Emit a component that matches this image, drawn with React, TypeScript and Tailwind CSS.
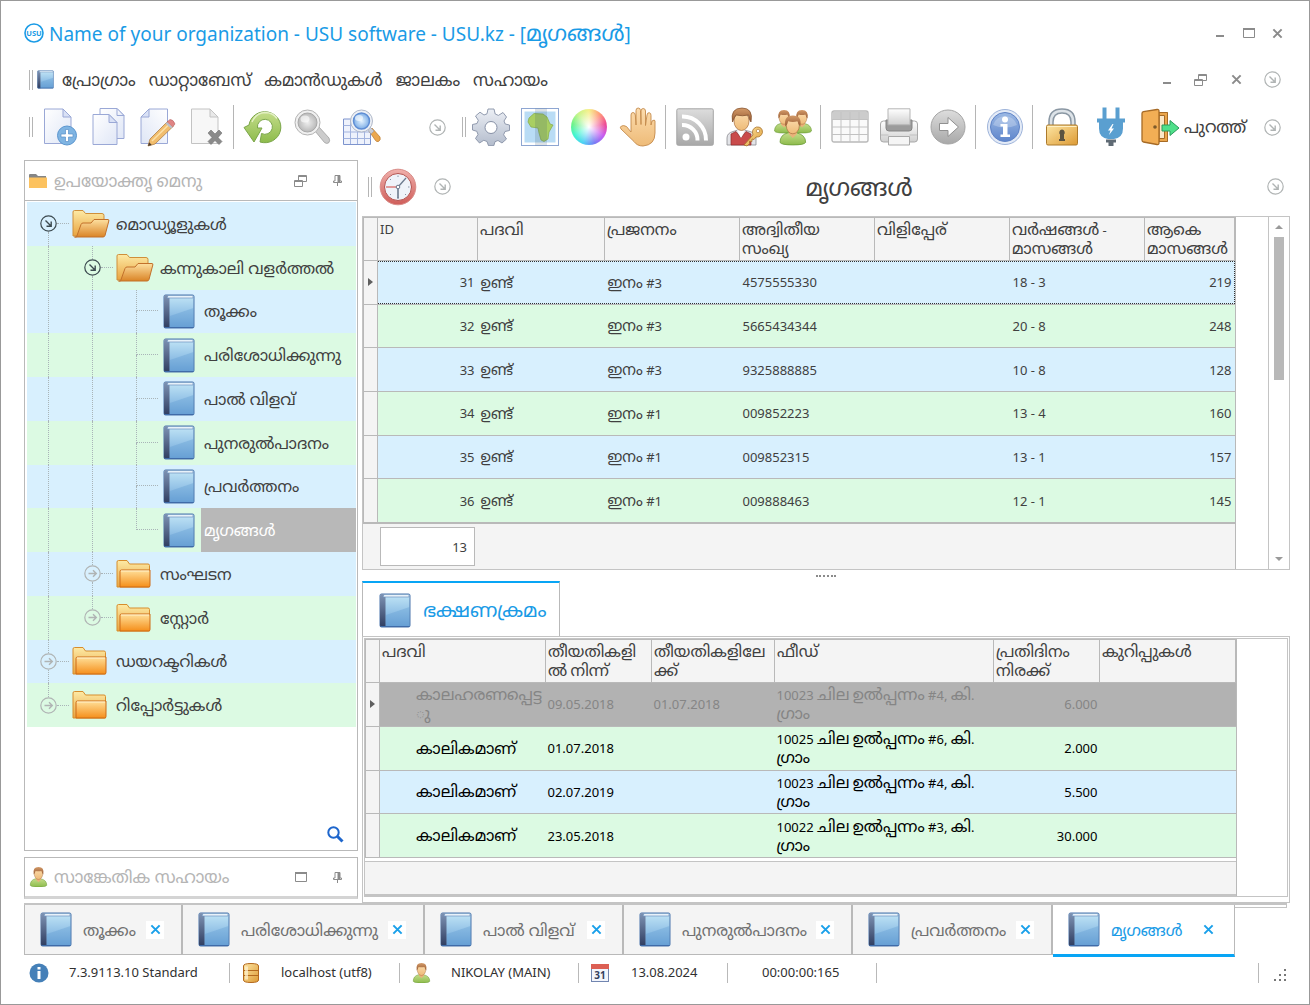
import React, { useState } from 'react';

type IconProps = { className?: string };

function Gradients() {
  return (
    <svg className="absolute h-0 w-0" aria-hidden="true">
      <defs>
        <linearGradient id="cover" x1="0" y1="0" x2="0" y2="1">
          <stop offset="0" stopColor="#c3e6f6" />
          <stop offset="0.5" stopColor="#97c5e8" />
          <stop offset="1" stopColor="#6aa1d6" />
        </linearGradient>
        <linearGradient id="spine" x1="0" y1="0" x2="0" y2="1">
          <stop offset="0" stopColor="#7e93b4" />
          <stop offset="1" stopColor="#2f3d60" />
        </linearGradient>
        <linearGradient id="paper" x1="0" y1="0" x2="1" y2="1">
          <stop offset="0" stopColor="#ffffff" />
          <stop offset="1" stopColor="#dfe6f6" />
        </linearGradient>
        <linearGradient id="grey" x1="0" y1="0" x2="0" y2="1">
          <stop offset="0" stopColor="#dddddd" />
          <stop offset="1" stopColor="#a8a8a8" />
        </linearGradient>
        <linearGradient id="light" x1="0" y1="0" x2="0" y2="1">
          <stop offset="0" stopColor="#ffffff" />
          <stop offset="1" stopColor="#cfcfcf" />
        </linearGradient>
        <linearGradient id="folderBack" x1="0" y1="0" x2="0" y2="1">
          <stop offset="0" stopColor="#fdeaa5" />
          <stop offset="1" stopColor="#e9a440" />
        </linearGradient>
        <linearGradient id="folderFront" x1="0" y1="0" x2="0" y2="1">
          <stop offset="0" stopColor="#ffe09a" />
          <stop offset="1" stopColor="#f58f1b" />
        </linearGradient>
        <linearGradient id="folderOpen" x1="0" y1="0" x2="0" y2="1">
          <stop offset="0" stopColor="#fde0a0" />
          <stop offset="1" stopColor="#da8426" />
        </linearGradient>
        <linearGradient id="green" x1="0" y1="0" x2="0" y2="1">
          <stop offset="0" stopColor="#c4dd8a" />
          <stop offset="1" stopColor="#8dbb4c" />
        </linearGradient>
        <linearGradient id="gear" x1="0" y1="0" x2="0" y2="1">
          <stop offset="0" stopColor="#eceff5" />
          <stop offset="1" stopColor="#b3bccc" />
        </linearGradient>
        <linearGradient id="skin" x1="0" y1="0" x2="0" y2="1">
          <stop offset="0" stopColor="#fcdcae" />
          <stop offset="1" stopColor="#eebb78" />
        </linearGradient>
        <linearGradient id="gold" x1="0" y1="0" x2="1" y2="1">
          <stop offset="0" stopColor="#fde6a4" />
          <stop offset="1" stopColor="#dd9a34" />
        </linearGradient>
        <linearGradient id="info" x1="0" y1="0" x2="0" y2="1">
          <stop offset="0" stopColor="#9cb9e4" />
          <stop offset="1" stopColor="#5f86cc" />
        </linearGradient>
        <linearGradient id="clockRim" x1="0" y1="0" x2="0" y2="1">
          <stop offset="0" stopColor="#f0b0ac" />
          <stop offset="1" stopColor="#cf5d59" />
        </linearGradient>
        <linearGradient id="hair" x1="0" y1="0" x2="0" y2="1">
          <stop offset="0" stopColor="#d39a68" />
          <stop offset="1" stopColor="#995c33" />
        </linearGradient>
        <radialGradient id="lens">
          <stop offset="0" stopColor="#e4f3ff" />
          <stop offset="1" stopColor="#7eaee6" />
        </radialGradient>
        <radialGradient id="lensGrey">
          <stop offset="0" stopColor="#eeeeee" />
          <stop offset="1" stopColor="#b9b9b9" />
        </radialGradient>
      </defs>
    </svg>
  );
}

function BookIcon({ className = 'h-[35px] w-8' }: IconProps) {
  return (
    <svg viewBox="0 0 32 35" className={`shrink-0 ${className}`} aria-hidden="true">
      <rect x="1" y="1" width="30" height="33" rx="1.5" fill="url(#cover)" stroke="#4a74ac" />
      <path d="M2 1h4.500v33H2.500Q1 34 1 32V2.500Z" fill="url(#spine)" />
      <path d="M5 1.500h25v2.500H4Z" fill="#e8f2fa" stroke="#6d93bf" strokeWidth="0.700" />
      <path d="M7 22 30.500 14v19H7Z" fill="#5f9ad2" opacity="0.350" />
      <path d="M1.500 33.500h29" stroke="#3f6ba8" />
    </svg>
  );
}

function FolderIcon({ open }: { open?: boolean }) {
  return (
    <svg viewBox="0 0 38 30" className="h-[30px] w-[38px] shrink-0" aria-hidden="true">
      {open ? (
        <>
          <path d="M1 27V3q0-1.500 1.500-1.500H11l2.500 3H30q2 0 2 2V27Z" fill="url(#folderBack)" stroke="#cf8f3a" />
          <path d="M4.500 28 9 15.500q.5-1.500 2-1.500h8l3-3.500h14q1.200 0 .8 1.500L33 26.500q-.5 1.500-2 1.500H2.500Z" fill="url(#folderOpen)" stroke="#c2702a" />
        </>
      ) : (
        <>
          <path d="M1 28V3q0-1.500 1.500-1.500H11l2.500 3.500H32q1.500 0 1.500 1.500V28Z" fill="url(#folderBack)" stroke="#d78d2c" />
          <path d="M4 28V12.500q0-1.500 1.500-1.500H34v15.500q0 1.500-1.500 1.500Z" fill="url(#folderFront)" stroke="#cd6a16" />
          <path d="M5 12h28" stroke="#fff1cc" />
        </>
      )}
    </svg>
  );
}

function CircleArrow({ dark, right }: { dark?: boolean; right?: boolean }) {
  return (
    <svg viewBox="0 0 17 17" className={`size-[17px] shrink-0 ${dark ? 'text-[#3c4a50]' : 'text-[#b0b4b4]'}`} fill="none" stroke="currentColor" aria-hidden="true">
      <circle cx="8.500" cy="8.500" r="7.700" strokeWidth="1.200" />
      {right ? (
        <path d="M4.500 8.500h7.500M9 5.200l3.300 3.300L9 11.800" strokeWidth="1.400" />
      ) : (
        <path d="M5.500 5.500l5.500 5.500M11.200 6.500v4.700H6.500" strokeWidth="1.400" />
      )}
    </svg>
  );
}

function PageIcon({ kind }: { kind: 'new' | 'edit' | 'delete' }) {
  const grey = kind === 'delete';
  return (
    <svg viewBox="0 0 38 40" className="h-10 w-[38px]" aria-hidden="true">
      <g transform={kind === 'edit' ? 'translate(34 0) scale(-1 1)' : ''}>
        <path d="M4.500 2H23l8 8v26.500H4.500Z" fill={grey ? '#f7f7f7' : 'url(#paper)'} stroke={grey ? '#c3c3c3' : '#9aa8d6'} />
        <path d="M23 2v8h8Z" fill={grey ? '#e9e9e9' : '#d9e1f5'} stroke={grey ? '#c3c3c3' : '#9aa8d6'} />
      </g>
      {kind === 'new' && (
        <g>
          <circle cx="27" cy="28.500" r="9.500" fill="#7fb4e2" stroke="#5b96cf" />
          <path d="M25.500 22.500h3V27H33v3h-4.500v4.500h-3V30H21v-3h4.500Z" fill="#fff" stroke="#5a8fc8" strokeWidth="0.700" />
        </g>
      )}
      {kind === 'edit' && (
        <g>
          <path d="M12 32 30 14l5.500 5L17 37l-7 2Z" fill="#f1bd6d" stroke="#a5743a" strokeWidth="0.700" />
          <path d="M14 34 32.500 16" stroke="#fbe0a8" strokeWidth="1.600" />
          <path d="m29 15 3-2.500q3.500 0 5 4.500L34.500 20Z" fill="#e08484" stroke="#b56363" strokeWidth="0.600" />
          <path d="m27.500 16.500 1.500-1.500 5.500 5-1.500 1.500Z" fill="#b9bfcc" />
          <path d="m10 39 1.200-3.800 2.500 2.700Z" fill="#4d3d33" />
        </g>
      )}
      {grey && <path d="m21 26 3-3 4 4 4-4 3 3-4 4.500 4 4-3 3-4-4-4 4-3-3 4-4Z" fill="#8a8a8a" stroke="#727272" strokeWidth="0.600" />}
    </svg>
  );
}

function CopyIcon() {
  return (
    <svg viewBox="0 0 38 40" className="h-10 w-[38px]" fill="url(#paper)" stroke="#9aa8d6" aria-hidden="true">
      <path d="M11 1.500h17l7 7v23H11Z" />
      <path d="M28 1.500v7h7Z" />
      <path d="M4 7.500h16l8 8v22H4Z" />
      <path d="M20 7.500v8h8Z" fill="#d9e1f5" />
    </svg>
  );
}

function RefreshIcon() {
  return (
    <svg viewBox="0 0 40 38" className="h-[38px] w-10" aria-hidden="true">
      <path d="M6 17A16 15.500 0 1 1 17 34l1.500-8.500A7.500 7.500 0 1 0 14.500 20h4.500L11 34 1 19.500Z" fill="url(#green)" stroke="#7ba64a" />
      <path d="M9 14Q13 5 22 4.500q8 0 12 6" fill="none" stroke="#e4f0c5" strokeWidth="1.500" />
    </svg>
  );
}

function LensIcon({ grid }: { grid?: boolean }) {
  return (
    <svg viewBox="0 0 40 38" className="h-[38px] w-10" aria-hidden="true">
      {grid ? (
        <>
          <path d="M2.500 11h27v25.500h-27Z" fill="#eef2fc" stroke="#7c93cd" />
          <path d="M2.500 17.500h27m-27 6.500h27m-27 6.500h27M9.500 11v25m7-25v25m7-25v25" stroke="#a3b4df" fill="none" />
          <path d="m28 23 3-3 8 9q1 3-1.500 4.500-2 .500-3-1Z" fill="#eba850" stroke="#b9792e" strokeWidth="0.700" />
          <path d="m26 21 2.500-2.500 4.500 4.500-3 3Z" fill="#c9ced8" stroke="#8f97a8" strokeWidth="0.500" />
          <circle cx="20.500" cy="13" r="11" fill="#eef1f6" stroke="#b0b8c9" />
          <circle cx="20.500" cy="13" r="8" fill="url(#lens)" stroke="#5f8dd4" strokeWidth="1.500" />
          <ellipse cx="18" cy="10" rx="4" ry="3" fill="#fff" opacity="0.600" />
        </>
      ) : (
        <>
          <path d="m23 23 4-4 10 11q1.500 3-.5 5-2 1-4-.5Z" fill="#cccccc" stroke="#9f9f9f" strokeWidth="0.800" />
          <circle cx="15.500" cy="14.500" r="12.500" fill="#f0f0f0" stroke="#b3b3b3" />
          <circle cx="15.500" cy="14.500" r="9.500" fill="url(#lensGrey)" stroke="#a7a7a7" />
          <ellipse cx="13" cy="11" rx="4.500" ry="3.500" fill="#fff" opacity="0.600" />
        </>
      )}
    </svg>
  );
}

function GearIcon() {
  return (
    <svg viewBox="0 0 38 38" className="size-[38px]" aria-hidden="true">
      <path
        d="M16 1h6l1.200 5 3.200 1.400L31 4.500 34.500 9 32 13l1.200 3L37.500 17v5.500L33 23.500l-1.400 3.300L34.500 31 30 35l-4-2.500-3 1.200-1.200 4H16.500L15 33.500l-3.200-1.200L7.500 35 3.500 30.500 6 26.500 4.800 23.300.5 22v-5.500L5 15.500l1.300-3.200L3.500 8 8 4.200 12 7l3-1.200Z"
        fill="url(#gear)"
        stroke="#8791a6"
        strokeWidth="0.900"
        strokeLinejoin="round"
      />
      <circle cx="19" cy="19.500" r="6" fill="#fff" stroke="#8791a6" />
    </svg>
  );
}

function MapIcon() {
  return (
    <svg viewBox="0 0 38 38" className="size-[38px]" aria-hidden="true">
      <rect x="0.500" y="0.500" width="37" height="37" fill="#fff" stroke="#8ea6d2" />
      <path d="M3.500 3.500h31v31h-31Z" fill="#b9dcf5" />
      <path d="M8 10l5-4.500 9 .5 4 3 3 7 3 1-4 7-1 7-4 2.500-3-1.500-2-7-1-5-7-1-3-5Z" fill="#a9cf62" stroke="#84ab46" strokeWidth="0.700" />
      <path d="M14 .5h12v37H14Z" fill="#3c5a70" opacity="0.180" />
    </svg>
  );
}

function HandIcon() {
  return (
    <svg viewBox="0 0 38 40" className="h-10 w-[38px]" aria-hidden="true">
      <path
        d="M12 25V8q0-2.500 2-2.500t2.300 2.500L17 18V3.500Q17 1 19.200 1t2.300 2.500L22 17.500V4q0-2.500 2.200-2.500T26.500 4v14.500L28 8q.3-2.500 2.200-2.300T32 8.500V18l1-4q3-2 3 0v12q0 12-12 13-6 0-9-4.500L2 22q-1.500-2 .5-3t5 .5Z"
        fill="url(#skin)"
        stroke="#c48a4b"
        strokeWidth="0.900"
      />
    </svg>
  );
}

function RssIcon() {
  return (
    <svg viewBox="0 0 38 38" className="size-[38px]" aria-hidden="true">
      <rect x="0.800" y="0.800" width="36.500" height="36.500" rx="1.500" fill="url(#grey)" stroke="#a5a5a5" />
      <circle cx="10" cy="29" r="3.500" fill="#fff" />
      <path d="M6 17a15 15 0 0 1 15.500 15.500M6 8.500a23.500 23.500 0 0 1 24 24" fill="none" stroke="#fff" strokeWidth="4" />
    </svg>
  );
}

function UserKeyIcon() {
  return (
    <svg viewBox="0 0 38 40" className="h-10 w-[38px]" aria-hidden="true">
      <path d="M2 38V31q0-5 6-6.500l5-1.500h6l6 1.500q6 1.500 6 6.500v7Z" fill="#e3e4e8" stroke="#8a8a90" strokeWidth="0.800" />
      <path d="M6 38V27l5-2.500 5 6.500 5-6.500 5 2.500v11Z" fill="#c94b4b" stroke="#8d2b2b" strokeWidth="0.700" />
      <path d="m12 23 4 8 4-8Z" fill="#fff" />
      <ellipse cx="16.500" cy="14" rx="7.500" ry="9.500" fill="url(#skin)" stroke="#a86d3d" strokeWidth="0.700" />
      <path d="M7.500 15Q5 1 17 1q11.500 0 9 14-2-2-2.500-7-6 1.500-12.500 0-2 3-3.500 7Z" fill="url(#hair)" stroke="#7d4a26" strokeWidth="0.700" />
      <path d="m19 38 9-10q-2-6 3.500-8 6-.5 6 5.500-1.500 5-6.500 4.500l-2 2.500-2-.5v2.500l-2.500-.3v2.500l-2.500 2.300Z" fill="url(#gold)" stroke="#a8712b" strokeWidth="0.800" />
      <circle cx="33" cy="24" r="1.700" fill="#fff" stroke="#a8712b" strokeWidth="0.600" />
    </svg>
  );
}

function Person() {
  return (
    <g>
      <path d="M0 21q0-6 6-7.500h6q7 1.500 7 7.500-1 2-9.500 2T0 21Z" fill="url(#green)" stroke="#6a9a37" strokeWidth="0.600" />
      <path d="M6.500 12h6v2.500l-3 3-3-3Z" fill="#e9b27a" />
      <ellipse cx="9.500" cy="8" rx="4.800" ry="6.300" fill="url(#skin)" stroke="#a86d3d" strokeWidth="0.500" />
      <path d="M4 8.500Q2.500 0 9.500 0T15 8.500q-1.500-1-2-4-3.500 1-7 0-.5 3-2 4Z" fill="url(#hair)" />
    </g>
  );
}

function UsersIcon() {
  return (
    <svg viewBox="0 0 38 38" className="size-[38px]" aria-hidden="true">
      <g transform="translate(.5 2)"><Person /></g>
      <g transform="translate(18.500 2)"><Person /></g>
      <g transform="translate(6 7.500) scale(1.350 1.280)"><Person /></g>
    </svg>
  );
}

function UserIcon() {
  return (
    <svg viewBox="0 0 19 23" className="h-5 w-[19px] shrink-0" aria-hidden="true">
      <Person />
    </svg>
  );
}

function SheetIcon() {
  return (
    <svg viewBox="0 0 38 34" className="h-[34px] w-[38px]" aria-hidden="true">
      <rect x="1" y="1" width="36" height="31" rx="2" fill="#fafafa" stroke="#b9b9b9" strokeWidth="1.400" />
      <path d="M2 2h34v7H2Z" fill="#cccccc" />
      <path d="M1 9.500h36M1 17h36M1 24.500h36M10 2v30m9-30v30m9-30v30" fill="none" stroke="#c2c2c2" />
    </svg>
  );
}

function PrinterIcon() {
  return (
    <svg viewBox="0 0 40 38" className="h-[38px] w-10" aria-hidden="true">
      <rect x="1.500" y="13" width="37" height="21" rx="3" fill="url(#light)" stroke="#a9a9a9" />
      <path d="M7 12h26v8q0 3-3 3H10q-3 0-3-3Z" fill="#9b9b9b" stroke="#858585" />
      <path d="M9 .8h22v16H9Z" fill="url(#light)" stroke="#b5b5b5" />
      <path d="M9.500 28.500h21v8.500h-21Z" fill="#f5f5f5" stroke="#a9a9a9" />
      <path d="M2 27h7.500m21 0H38" stroke="#c0c0c0" />
    </svg>
  );
}

function GoIcon() {
  return (
    <svg viewBox="0 0 38 38" className="size-[38px]" aria-hidden="true">
      <circle cx="19" cy="19" r="17" fill="url(#grey)" stroke="#a5a5a5" />
      <path d="M10.500 15.500H19V9.500L29.500 19 19 28.500v-6h-8.500Z" fill="#fff" stroke="#909090" />
    </svg>
  );
}

function InfoIcon() {
  return (
    <svg viewBox="0 0 38 38" className="size-[38px]" aria-hidden="true">
      <circle cx="19" cy="19" r="17.500" fill="#e4ebf7" stroke="#9db3da" />
      <circle cx="19" cy="19" r="14.500" fill="url(#info)" stroke="#5f83c6" />
      <path d="M7 17a12.500 12.500 0 0 1 24 0q-12 5-24 0Z" fill="#fff" opacity="0.250" />
      <circle cx="19" cy="11.500" r="3" fill="#fff" />
      <path d="M14.500 16h7v10.500H24V29H14.500v-2.500H17v-8h-2.500Z" fill="#fff" />
    </svg>
  );
}

function LockIcon() {
  return (
    <svg viewBox="0 0 34 38" className="h-[38px] w-[34px]" aria-hidden="true">
      <path d="M6 18v-4Q6 3 17 3t11 11v4" fill="none" stroke="#8a97a3" strokeWidth="5.500" />
      <path d="M6 18v-4Q6 3 17 3t11 11v4" fill="none" stroke="#dde3e8" strokeWidth="2.500" />
      <rect x="1.500" y="17" width="31" height="20" rx="1.500" fill="url(#gold)" stroke="#ac7a2c" />
      <path d="M2.500 18.500h29" stroke="#fff0c4" />
      <path d="M17 21.500a3 3 0 0 1 2 5v4.500h1v2h-6v-2h1v-4.500a3 3 0 0 1 2-5Z" fill="#5c5340" />
    </svg>
  );
}

function PlugIcon() {
  return (
    <svg viewBox="0 0 30 40" className="h-10 w-[30px]" aria-hidden="true">
      <path d="M6.500.500h4V12h-4ZM19.500.5h4V12h-4Z" fill="#5a9fd0" />
      <path d="M1 11.500h28v4h-2v6q0 9-9 10.500h-6Q3 30.500 3 21.500v-6H1Z" fill="#5a9fd0" />
      <path d="M16.500 17 12 23.500h2.500L13 28l5-6.500h-2.500l2-4.500Z" fill="#fff" />
      <path d="M10 32.500h10v3h-2.500V39h-5v-3.500H10Z" fill="#5f6a74" />
    </svg>
  );
}

function DoorIcon() {
  return (
    <svg viewBox="0 0 40 38" className="h-[38px] w-10" aria-hidden="true">
      <path d="M19 5h8v28h-8Z" fill="#fbe7c7" stroke="#a66a25" strokeWidth="1.300" />
      <path d="M19 4.500h8.500v29H19v-3h5.500v-23H19Z" fill="#eaa54b" stroke="#a66a25" />
      <path d="M2 5.500Q2 4 3.500 3.700L17 1.500q2-.3 2 1.500v32q0 1.800-2 1.500L3.500 34Q2 33.700 2 32Z" fill="#f2ae55" stroke="#a66a25" strokeWidth="1.300" />
      <circle cx="15" cy="19" r="1.800" fill="#7d5a2a" />
      <path d="M22 17h8v-4.500l9 7.500-9 7.500V23h-8Z" fill="#4fe08a" stroke="#2c9a5c" strokeLinejoin="round" />
    </svg>
  );
}

function ClockIcon() {
  return (
    <svg viewBox="0 0 38 38" className="size-[38px]" aria-hidden="true">
      <circle cx="19" cy="19" r="17.800" fill="url(#clockRim)" stroke="#d98c88" />
      <circle cx="19" cy="19" r="13.500" fill="#eff3fa" stroke="#b45350" />
      <path d="M19 7.500v1.500M19 29v1.500M30.500 19H29M27 27l-1-1M11 27l1-1M11 11l1 1" stroke="#8995a8" />
      <path d="M19 19v11.500" stroke="#6c7a8e" strokeWidth="1.600" />
      <path d="m19 19 8-9" stroke="#6c7a8e" strokeWidth="1.300" />
      <path d="M19 19H7" stroke="#d86b68" strokeWidth="1.300" />
      <circle cx="19" cy="19" r="1.800" fill="#fff" stroke="#6c7a8e" />
    </svg>
  );
}

function MinimizeIcon() {
  return (
    <svg viewBox="0 0 12 12" className="size-3" aria-hidden="true">
      <path d="M2 8h8v2H2Z" fill="#8b8b8b" />
    </svg>
  );
}

function MaximizeIcon() {
  return (
    <svg viewBox="0 0 12 12" className="size-3" aria-hidden="true">
      <path d="M.500 1.500h11v9H.500Z" fill="none" stroke="#8b8b8b" />
      <path d="M0 1h12v2H0Z" fill="#8b8b8b" />
    </svg>
  );
}

function RestoreIcon() {
  return (
    <svg viewBox="0 0 13 12" className="h-3 w-[13px]" fill="none" stroke="#8b8b8b" aria-hidden="true">
      <path d="M4.500 5V.5h8v6H9M4.500 1.500h8" />
      <path d="M.5 5.500h8v6H.5ZM.5 6.500h8" />
    </svg>
  );
}

function CloseIcon({ className = 'size-[11px] text-[#8b8b8b]' }: IconProps) {
  return (
    <svg viewBox="0 0 12 12" className={className} fill="none" stroke="currentColor" strokeWidth="2.200" aria-hidden="true">
      <path d="m1.500 1.500 9 9m0-9-9 9" />
    </svg>
  );
}

function PinIcon() {
  return (
    <svg viewBox="0 0 9 11" className="h-[11px] w-[9px]" aria-hidden="true">
      <path d="M2 .500h5v5.500h1.500v1.500h-8V6H2Z" fill="none" stroke="#8b8b8b" />
      <path d="M4.500 1h2.500v6H4.500ZM4 7.500h1V11H4Z" fill="#8b8b8b" />
    </svg>
  );
}

function Grip() {
  return <span className="h-5 w-1 shrink-0 border-x border-[#b5b5b5]" />;
}

function Divider() {
  return <span className="mx-[3px] h-11 w-[2px] shrink-0 border-l border-[#b5b5b5]" />;
}

function IconButton({ label, children }: { label: string; children: React.ReactNode }) {
  return (
    <button type="button" aria-label={label} className="flex shrink-0 items-center justify-center">
      {children}
    </button>
  );
}

function Tool({ label, children }: { label: string; children: React.ReactNode }) {
  return (
    <button type="button" aria-label={label} className="flex w-[49px] shrink-0 items-center justify-center">
      {children}
    </button>
  );
}

// Malayalam glyphs need a larger size than the digits and Latin beside them
function Mixed({ text, className = 'text-[16px]' }: { text: string; className?: string }) {
  return (
    <>
      {text.split(/([\u0d00-\u0d7f]+)/).map((part, i) =>
        i % 2 ? <span key={i} className={className}>{part}</span> : part,
      )}
    </>
  );
}

const MENU = ['പ്രോഗ്രാം', 'ഡാറ്റാബേസ്', 'കമാൻഡുകൾ', 'ജാലകം', 'സഹായം'];

type TreeRow = {
  label: string;
  level: number;
  open?: boolean;
  leaf?: boolean;
  first?: boolean;
  last?: boolean;
};

const TREE: TreeRow[] = [
  { label: 'മൊഡ്യൂളുകൾ', level: 0, open: true, first: true },
  { label: 'കന്നുകാലി വളർത്തൽ', level: 1, open: true },
  { label: 'തൂക്കം', level: 2, leaf: true },
  { label: 'പരിശോധിക്കുന്നു', level: 2, leaf: true },
  { label: 'പാൽ വിളവ്', level: 2, leaf: true },
  { label: 'പുനരുൽപാദനം', level: 2, leaf: true },
  { label: 'പ്രവർത്തനം', level: 2, leaf: true },
  { label: 'മൃഗങ്ങൾ', level: 2, leaf: true, last: true },
  { label: 'സംഘടന', level: 1 },
  { label: 'സ്റ്റോർ', level: 1, last: true },
  { label: 'ഡയറക്ടറികൾ', level: 0 },
  { label: 'റിപ്പോർട്ടുകൾ', level: 0, last: true },
];

const ANIMAL_COLUMNS = [
  { title: 'ID', width: 'w-[100px]' },
  { title: 'പദവി', width: 'w-[127px]' },
  { title: 'പ്രജനനം', width: 'w-[135px]' },
  { title: 'അദ്വിതീയ\nസംഖ്യ', width: 'w-[135px]' },
  { title: 'വിളിപ്പേര്', width: 'w-[135px]' },
  { title: 'വർഷങ്ങൾ -\nമാസങ്ങൾ', width: 'w-[135px]' },
  { title: 'ആകെ\nമാസങ്ങൾ', width: 'w-[90px]' },
];

const ANIMALS = [
  ['31', 'ഉണ്ട്', 'ഇനം #3', '4575555330', '', '18 - 3', '219'],
  ['32', 'ഉണ്ട്', 'ഇനം #3', '5665434344', '', '20 - 8', '248'],
  ['33', 'ഉണ്ട്', 'ഇനം #3', '9325888885', '', '10 - 8', '128'],
  ['34', 'ഉണ്ട്', 'ഇനം #1', '009852223', '', '13 - 4', '160'],
  ['35', 'ഉണ്ട്', 'ഇനം #1', '009852315', '', '13 - 1', '157'],
  ['36', 'ഉണ്ട്', 'ഇനം #1', '009888463', '', '12 - 1', '145'],
];

const DIET_COLUMNS = [
  { title: 'പദവി', width: 'w-[166px]' },
  { title: 'തീയതികളി\nൽ നിന്ന്', width: 'w-[106px]' },
  { title: 'തീയതികളിലേ\nക്ക്', width: 'w-[123px]' },
  { title: 'ഫീഡ്', width: 'w-[219px]' },
  { title: 'പ്രതിദിനം\nനിരക്ക്', width: 'w-[106px]' },
  { title: 'കുറിപ്പുകൾ', width: 'w-[136px]' },
];

const DIET = [
  { status: 'കാലഹരണപ്പെട്ട\nു', from: '09.05.2018', to: '01.07.2018', feed: '10023 ചില ഉൽപ്പന്നം #4, കി.\nഗ്രാം', rate: '6.000' },
  { status: 'കാലികമാണ്', from: '01.07.2018', to: '', feed: '10025 ചില ഉൽപ്പന്നം #6, കി.\nഗ്രാം', rate: '2.000' },
  { status: 'കാലികമാണ്', from: '02.07.2019', to: '', feed: '10023 ചില ഉൽപ്പന്നം #4, കി.\nഗ്രാം', rate: '5.500' },
  { status: 'കാലികമാണ്', from: '23.05.2018', to: '', feed: '10022 ചില ഉൽപ്പന്നം #3, കി.\nഗ്രാം', rate: '30.000' },
];

const WINDOWS = [
  { label: 'തൂക്കം', width: 'w-[159px]' },
  { label: 'പരിശോധിക്കുന്നു', width: 'w-[242px]' },
  { label: 'പാൽ വിളവ്', width: 'w-[199px]' },
  { label: 'പുനരുൽപാദനം', width: 'w-[229px]' },
  { label: 'പ്രവർത്തനം', width: 'w-[200px]' },
  { label: 'മൃഗങ്ങൾ', width: 'w-[182px]' },
];

function TitleBar() {
  return (
    <header className="flex h-16 items-center">
      <svg viewBox="0 0 20 20" className="size-5" aria-hidden="true">
        <circle cx="10" cy="10" r="9" fill="none" stroke="#1a9be6" strokeWidth="1.600" />
        <text x="10" y="12.800" textAnchor="middle" fontSize="7.500" fontWeight="bold" fill="#1a9be6">USU</text>
      </svg>
      <h1 className="ml-[5px] flex-1 text-[19px] leading-6 text-[#1a9be6]">
        <Mixed text="Name of your organization - USU software - USU.kz - [മൃഗങ്ങൾ]" className="text-[22px]" />
      </h1>
      <div className="mr-1 flex items-center gap-[17px]">
        <IconButton label="Minimize"><MinimizeIcon /></IconButton>
        <IconButton label="Maximize"><MaximizeIcon /></IconButton>
        <IconButton label="Close"><CloseIcon /></IconButton>
      </div>
    </header>
  );
}

function MenuBar() {
  return (
    <nav className="flex h-[29px] items-center pl-[5px]">
      <Grip />
      <BookIcon className="ml-1 h-[19px] w-[17px]" />
      <div className="ml-2 flex flex-1 gap-[13px] text-[17px] text-[#404040]">
        {MENU.map((item) => (
          <button key={item} type="button">{item}</button>
        ))}
      </div>
      <div className="mr-[6px] flex items-center">
        <IconButton label="Minimize"><MinimizeIcon /></IconButton>
        <span className="w-[21px]" />
        <IconButton label="Restore"><RestoreIcon /></IconButton>
        <span className="w-6" />
        <IconButton label="Close"><CloseIcon /></IconButton>
        <span className="w-[22px]" />
        <IconButton label="More"><CircleArrow /></IconButton>
      </div>
    </nav>
  );
}

function ToolBar() {
  return (
    <div className="flex h-[66px] items-center pl-[5px]">
      <Grip />
      <span className="w-px" />
      <Tool label="New"><PageIcon kind="new" /></Tool>
      <Tool label="Copy"><CopyIcon /></Tool>
      <Tool label="Edit"><PageIcon kind="edit" /></Tool>
      <Tool label="Delete"><PageIcon kind="delete" /></Tool>
      <Divider />
      <Tool label="Refresh"><RefreshIcon /></Tool>
      <Tool label="Search"><LensIcon /></Tool>
      <Tool label="Filter"><LensIcon grid /></Tool>
      <span className="w-11" />
      <IconButton label="More"><CircleArrow /></IconButton>
      <span className="w-4" />
      <Grip />
      <Tool label="Settings"><GearIcon /></Tool>
      <Tool label="Map"><MapIcon /></Tool>
      <Tool label="Colors">
        <span className="flex size-9 rounded-full bg-[conic-gradient(#f6f08a,#ff9a7a,#ee4b93,#c95cf0,#7a7cf5,#4fd0f5,#3ff5d0,#6cf28a,#c8f58c,#f6f08a)]">
          <span className="size-9 rounded-full bg-[radial-gradient(circle,#ffffff_0%,#ffffff00_65%)]" />
        </span>
      </Tool>
      <Tool label="Hold"><HandIcon /></Tool>
      <Divider />
      <Tool label="Feed"><RssIcon /></Tool>
      <Tool label="Access"><UserKeyIcon /></Tool>
      <Tool label="Users"><UsersIcon /></Tool>
      <Divider />
      <Tool label="Sheet"><SheetIcon /></Tool>
      <Tool label="Print"><PrinterIcon /></Tool>
      <Tool label="Go"><GoIcon /></Tool>
      <Divider />
      <Tool label="Info"><InfoIcon /></Tool>
      <Divider />
      <Tool label="Lock"><LockIcon /></Tool>
      <Tool label="Connection"><PlugIcon /></Tool>
      <button type="button" className="flex shrink-0 items-center gap-1 pl-[5px] text-[17px] text-[#404040]">
        <DoorIcon />
        പുറത്ത്
      </button>
      <span className="flex-1" />
      <span className="mr-[6px] flex">
        <IconButton label="More"><CircleArrow /></IconButton>
      </span>
    </div>
  );
}

function TreeItem({ row, striped, active }: { row: TreeRow; striped: boolean; active: boolean }) {
  const inModules = row.level > 0;
  return (
    <li className={`flex items-center pl-[13px] ${striped ? 'bg-[#dcfae3]' : 'bg-[#d8f0fe]'}`}>
      {inModules && <span className="ml-2 h-full w-9 shrink-0 border-l border-dotted border-[#a9b4b8]" />}
      {row.leaf && <span className="ml-2 h-full w-9 shrink-0 border-l border-dotted border-[#a9b4b8]" />}
      {row.leaf ? (
        <span className="ml-2 flex h-full w-[27px] shrink-0 flex-col">
          <span className="h-1/2 w-[22px] border-b border-l border-dotted border-[#a9b4b8]" />
          {!row.last && <span className="h-1/2 border-l border-dotted border-[#a9b4b8]" />}
        </span>
      ) : (
        <>
          <span className="flex h-full w-[17px] shrink-0 flex-col items-center">
            <span className={`flex-1 border-l border-dotted ${row.first ? 'border-transparent' : 'border-[#a9b4b8]'}`} />
            <CircleArrow dark={row.open} right={!row.open} />
            <span className={`flex-1 border-l border-dotted ${row.last ? 'border-transparent' : 'border-[#a9b4b8]'}`} />
          </span>
          <span className="mr-[3px] w-3 shrink-0 border-b border-dotted border-[#a9b4b8]" />
        </>
      )}
      {row.leaf ? <BookIcon /> : <FolderIcon open={row.open} />}
      <a
        href="#"
        className={`flex h-full flex-1 items-center whitespace-nowrap text-[16px] ${row.leaf ? 'ml-[6px] pl-[3px]' : 'pl-[6px]'} ${active ? 'bg-[#b8b8b8] text-white' : 'text-[#404040]'}`}
      >
        {row.label}
      </a>
    </li>
  );
}

function Sidebar() {
  return (
    <aside className="flex w-[334px] shrink-0 flex-col">
      <section className="flex flex-1 flex-col border border-[#b9b9b9]">
        <div className="flex h-10 items-center border-b border-[#b9b9b9] pl-1">
          <svg viewBox="0 0 18 14" className="h-[14px] w-[18px]" aria-hidden="true">
            <path d="M0 1q0-1 1-1h6l2 2h8v4H0Z" fill="#858585" />
            <path d="M0 3.500h18V14H0Z" fill="#fcc25f" />
          </svg>
          <h2 className="ml-[7px] flex-1 text-[17px] text-[#b5b5b5]">ഉപയോക്തൃ മെനു</h2>
          <IconButton label="Restore"><RestoreIcon /></IconButton>
          <span className="w-[26px]" />
          <IconButton label="Pin"><PinIcon /></IconButton>
          <span className="w-[15px]" />
        </div>
        <ul className="mr-px ml-[2px] mt-px grid h-[525px] grid-rows-12">
          {TREE.map((row, i) => (
            <TreeItem key={row.label} row={row} striped={i % 2 === 1} active={row.label === 'മൃഗങ്ങൾ'} />
          ))}
        </ul>
        <div className="mt-auto flex justify-end pr-[13px] pb-[7px]">
          <IconButton label="Search">
            <svg viewBox="0 0 17 17" className="size-[17px]" fill="none" stroke="#1e66cc" aria-hidden="true">
              <circle cx="6.500" cy="6.500" r="5.200" strokeWidth="2" />
              <path d="m10.500 10.500 5 5" strokeWidth="3" />
            </svg>
          </IconButton>
        </div>
      </section>
      <section className="mt-[6px] mb-1 flex h-[42px] items-center border border-b-[3px] border-[#b9b9b9] border-b-[#d4d4d4] pl-1">
        <UserIcon />
        <h2 className="ml-[6px] flex-1 text-[17px] text-[#b5b5b5]">സാങ്കേതിക സഹായം</h2>
        <IconButton label="Maximize"><MaximizeIcon /></IconButton>
        <span className="w-[26px]" />
        <IconButton label="Pin"><PinIcon /></IconButton>
        <span className="w-[15px]" />
      </section>
    </aside>
  );
}

function Marker() {
  return (
    <svg viewBox="0 0 5 8" className="mx-auto h-2 w-[5px]" aria-hidden="true">
      <path d="M0 0v8l5-4Z" fill="#5f5f5f" />
    </svg>
  );
}

function HeaderRow({ columns, gutter }: { columns: { title: string; width: string }[]; gutter: string }) {
  return (
    <thead>
      <tr className="h-[43px] bg-[#f4f4f4]">
        <th className={`${gutter} border border-[#b9b9b9]`} aria-label="Row" />
        {columns.map((column) => (
          <th key={column.title} className={`${column.width} border border-[#b9b9b9] px-[2px] pt-[2px] text-left align-top font-normal whitespace-pre leading-[18px]`}>
            {column.title.split('\n').map((line) => (
              <span key={line} className="block"><Mixed text={line} /></span>
            ))}
          </th>
        ))}
      </tr>
    </thead>
  );
}

function AnimalsGrid() {
  return (
    <div className="flex border border-[#c4c4c4]">
      <div className="flex flex-1 flex-col border-r border-[#b9b9b9] bg-[#f4f4f4]">
        <table className="h-[306px] w-full table-fixed border-collapse text-[13px] text-[#404040]">
          <HeaderRow columns={ANIMAL_COLUMNS} gutter="w-[14px]" />
          <tbody>
            {ANIMALS.map((cells, i) => (
              <tr key={cells[0]} className={`${i % 2 ? 'bg-[#dcfae3]' : 'bg-[#d8f0fe]'} ${i === 0 ? 'outline-1 -outline-offset-1 outline-dotted outline-[#303030]' : ''}`}>
                <td className="relative z-10 border border-[#b9b9b9] bg-[#f4f4f4]">{i === 0 && <Marker />}</td>
                {cells.map((cell, c) => (
                  <td key={c} className={`border-y border-[#b9b9b9] px-[3px] leading-4 ${c === 0 || c === 6 ? 'text-right' : ''}`}>
                    <Mixed text={cell} className="text-[15px]" />
                  </td>
                ))}
              </tr>
            ))}
          </tbody>
        </table>
        <div className="flex h-[46px] items-center border-t border-[#b9b9b9] pl-[17px]">
          <input readOnly aria-label="Count" value="13" className="h-[39px] w-[95px] border border-[#b9b9b9] bg-white pr-[7px] text-right text-[13px] text-[#404040]" />
        </div>
      </div>
      <div className="w-8 shrink-0" />
      <div className="flex w-[21px] shrink-0 flex-col items-center border-l border-[#c4c4c4] py-2">
        <svg viewBox="0 0 8 4" className="h-1 w-2" aria-hidden="true"><path d="M0 4h8L4 0Z" fill="#9a9a9a" /></svg>
        <div className="mt-2 h-[143px] w-[10px] bg-[#b8b8b8]" />
        <span className="flex-1" />
        <svg viewBox="0 0 8 4" className="h-1 w-2" aria-hidden="true"><path d="M0 0h8L4 4Z" fill="#9a9a9a" /></svg>
      </div>
    </div>
  );
}

function DietPanel() {
  return (
    <section className="flex flex-1 flex-col">
      <div className="flex h-[55px]">
        <button type="button" className="-mb-px flex w-[198px] items-center border-x border-t-2 border-x-[#b9b9b9] border-t-[#08a5f5] bg-white pl-4 text-[20px] whitespace-nowrap text-[#1a9be6]">
          <BookIcon />
          <span className="ml-3">ഭക്ഷണക്രമം</span>
        </button>
        <span className="flex-1" />
      </div>
      <div className="flex flex-1 border border-[#c4c4c4] p-px pb-[5px]">
        <div className="flex flex-1 border border-[#c4c4c4] pr-[50px]">
          <div className="flex flex-1 flex-col border-r border-[#b9b9b9]">
            <table className="h-[219px] w-full table-fixed border-collapse text-[13px] text-[#404040]">
              <HeaderRow columns={DIET_COLUMNS} gutter="w-[14px]" />
              <tbody>
                {DIET.map((row, i) => (
                  <tr key={i} className={i === 0 ? 'bg-[#b2b2b2] text-[#858585]' : i % 2 ? 'bg-[#dcfae3] text-black' : 'bg-[#d8f0fe] text-black'}>
                    <td className="border border-[#b9b9b9] bg-[#f4f4f4]">{i === 0 && <Marker />}</td>
                    <td className="border-y border-[#b9b9b9] py-0 pl-9 leading-[18px] whitespace-pre"><Mixed text={row.status} /></td>
                    <td className="border-y border-[#b9b9b9] px-[2px] leading-[18px]">{row.from}</td>
                    <td className="border-y border-[#b9b9b9] px-[2px] leading-[18px]">{row.to}</td>
                    <td className="border-y border-[#b9b9b9] px-[2px] py-0 leading-[18px] whitespace-pre"><Mixed text={row.feed} /></td>
                    <td className="border-y border-[#b9b9b9] px-[2px] text-right leading-[18px]">{row.rate}</td>
                    <td className="border-y border-[#b9b9b9]" />
                  </tr>
                ))}
              </tbody>
            </table>
            <div className="mt-[3px] flex-1 border-t border-b-2 border-[#c4c4c4] bg-[#f4f4f4]" />
          </div>
        </div>
      </div>
    </section>
  );
}

function Workspace() {
  return (
    <main className="flex flex-1 flex-col">
      <div className="flex h-14 items-center pb-[3px] pl-[6px]">
        <Grip />
        <span className="w-[7px]" />
        <IconButton label="Clock"><ClockIcon /></IconButton>
        <span className="w-[17px]" />
        <IconButton label="More"><CircleArrow /></IconButton>
        <h2 className="flex-1 text-center text-[24px] leading-8 text-[#404040]">മൃഗങ്ങൾ</h2>
        <span className="mr-[6px] flex">
          <IconButton label="More"><CircleArrow /></IconButton>
        </span>
      </div>
      <AnimalsGrid />
      <div className="flex h-[11px] items-center justify-center">
        <span className="w-5 border-t-2 border-dotted border-[#8b8b8b]" />
      </div>
      <DietPanel />
    </main>
  );
}

function WindowTabs() {
  const [active, setActive] = useState(WINDOWS.length - 1);
  return (
    <div className="flex h-[54px] border-t-2 border-[#c4c4c4]">
      {WINDOWS.map((item, i) => {
        const on = i === active;
        return (
          <div
            key={item.label}
            className={`flex shrink-0 items-center pl-[15px] ${item.width} ${on ? 'border-r border-b-[3px] border-r-[#b9b9b9] border-b-[#08a5f5] bg-white text-[#1a9be6]' : 'mb-[2px] border-r-2 border-b border-[#b9b9b9] bg-[#f4f4f4] text-[#707070] first:border-l'}`}
          >
            <button type="button" onClick={() => setActive(i)} className="flex flex-1 items-center gap-[11px] text-[16px] whitespace-nowrap">
              <BookIcon />
              {item.label}
            </button>
            <button type="button" aria-label="Close" className="mr-[17px] flex size-[18px] items-center justify-center bg-white">
              <CloseIcon className="size-[11px] text-[#1aa0ea]" />
            </button>
          </div>
        );
      })}
      <span className="h-[3px] flex-1 border-r border-b border-[#c4c4c4]" />
    </div>
  );
}

function StatusBar() {
  return (
    <footer className="flex h-[31px] items-center text-[13px] text-[#303030]">
      <div className="flex h-5 w-[206px] items-center border-r border-[#b9b9b9] pl-[5px]">
        <svg viewBox="0 0 20 20" className="size-5" aria-hidden="true">
          <circle cx="10" cy="10" r="9.500" fill="#4580b8" />
          <path d="M8.500 4h3v2.500h-3ZM8.500 8h3v8h-3Z" fill="#fff" />
        </svg>
        <span className="ml-5">7.3.9113.10 Standard</span>
      </div>
      <div className="flex h-5 w-[170px] items-center border-r border-[#b9b9b9] pl-[13px]">
        <svg viewBox="0 0 16 20" className="h-5 w-4" aria-hidden="true">
          <path d="M.5 3q0-2.500 7.500-2.500T15.500 3v14q0 2.500-7.500 2.500T.5 17Z" fill="url(#gold)" stroke="#b4691d" />
          <path d="M.5 7.500h15m-15 5h15" stroke="#b4691d" />
          <path d="M2 3.500h3v13H2Z" fill="#fff4d4" opacity="0.700" />
        </svg>
        <span className="ml-[22px]">localhost (utf8)</span>
      </div>
      <div className="flex h-5 w-[179px] items-center border-r border-[#b9b9b9] pl-3">
        <UserIcon />
        <span className="ml-5">NIKOLAY (MAIN)</span>
      </div>
      <div className="flex h-5 w-[149px] items-center border-r border-[#b9b9b9] pl-3">
        <svg viewBox="0 0 18 18" className="size-[18px]" aria-hidden="true">
          <rect x="0.500" y="0.500" width="17" height="17" fill="#f2f5fc" stroke="#7185b0" />
          <path d="M0 0h18v5H0Z" fill="#dc5f54" />
          <text x="9" y="15" textAnchor="middle" fontSize="10" fontWeight="bold" fill="#333f5e">31</text>
        </svg>
        <span className="ml-[22px]">13.08.2024</span>
      </div>
      <div className="flex h-5 w-[149px] items-center border-r border-[#b9b9b9] pl-[34px]">00:00:00:165</div>
      <span className="flex-1" />
      <span className="h-5 border-l border-[#b9b9b9]" />
      <svg viewBox="0 0 14 14" className="mt-1 ml-[14px] size-[14px]" fill="#777777" aria-hidden="true">
        <path d="M11 1h2v2h-2ZM11 6h2v2h-2ZM6 6h2v2H6ZM11 11h2v2h-2ZM6 11h2v2H6ZM1 11h2v2H1Z" />
      </svg>
    </footer>
  );
}

export default function App() {
  return (
    <div lang="ml" className="flex min-h-screen flex-col border border-[#999999] bg-white pr-[22px] pb-4 pl-[23px] font-['Noto_Sans','Noto_Sans_Malayalam',sans-serif]">
      <Gradients />
      <TitleBar />
      <MenuBar />
      <ToolBar />
      <div className="flex flex-1 gap-1">
        <Sidebar />
        <Workspace />
      </div>
      <WindowTabs />
      <StatusBar />
    </div>
  );
}
